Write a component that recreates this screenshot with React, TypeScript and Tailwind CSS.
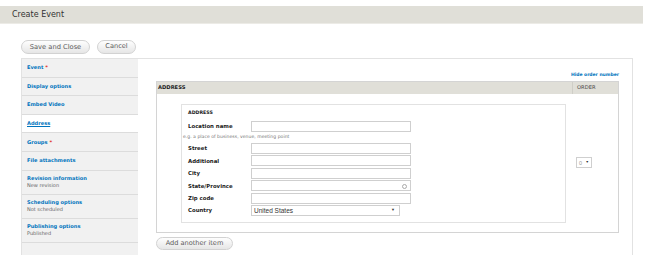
import React from "react";

type Tab = { label: string; sub?: string; required?: boolean; active?: boolean; tall?: boolean };

const tabs: Tab[] = [
  { label: "Event", required: true },
  { label: "Display options" },
  { label: "Embed Video" },
  { label: "Address", active: true },
  { label: "Groups", required: true },
  { label: "File attachments" },
  { label: "Revision information", sub: "New revision", tall: true },
  { label: "Scheduling options", sub: "Not scheduled", tall: true },
  { label: "Publishing options", sub: "Published", tall: true },
];

const fields = ["Street", "Additional", "City", "State/Province", "Zip code"];

function PillButton({ children, className }: { children: React.ReactNode; className?: string }) {
  return (
    <button
      className={
        "flex items-center justify-center rounded-full border border-[#d2d2d2] bg-gradient-to-b from-[#fefefe] to-[#e6e6e6] text-[#5c5c5c] " +
        (className || "")
      }
    >
      {children}
    </button>
  );
}

function TextInput({ throbber }: { throbber?: boolean }) {
  return (
    <div className="relative h-[11px] w-[160px] border border-[#cfcfcf] bg-white">
      {throbber && (
        <span className="absolute right-[3px] top-[2.5px] h-[5px] w-[5px] rounded-full border border-[#aaa]" />
      )}
    </div>
  );
}

export default function App() {
  return (
    <div className="h-[269px] w-[649px] overflow-hidden bg-white font-['DejaVu_Sans',sans-serif] text-[#333]">
      <div className="pt-[6px]">
        <div className="flex h-[18px] w-[643px] items-center border-b border-[#ecebe6] bg-[#e0dfd8] pl-[12px] text-[8px]">
          Create Event
        </div>
      </div>

      <div className="ml-[21px] mt-[16px] flex gap-[7px]">
        <PillButton className="h-[14px] w-[69px] text-[6.7px]">Save and Close</PillButton>
        <PillButton className="h-[14px] w-[39px] text-[6.6px]">Cancel</PillButton>
      </div>

      <div className="ml-[21px] mt-[4px] flex h-[197px] w-[612px] border-r border-t border-[#e2e2e2]">
        {/* vertical tabs */}
        <div className="w-[117px] shrink-0 border-l border-[#e2e2e2] bg-[#f1f1f1]">
          {tabs.map((t) => (
            <div
              key={t.label}
              className={
                "flex flex-col justify-center border-b border-[#dcdcdc] pl-[5px] " +
                (t.tall ? "h-[24px] " : "h-[18.6px] ") +
                (t.active ? "bg-white" : "")
              }
            >
              <div className={"text-[5.1px] font-bold leading-[7px] text-[#0074bd] " + (t.active ? "underline" : "")}>
                {t.label}
                {t.required && <span className="ml-[2px] text-[#e2322e]">*</span>}
              </div>
              {t.sub && <div className="text-[5px] leading-[7px] text-[#666]">{t.sub}</div>}
            </div>
          ))}
        </div>

        {/* content */}
        <div className="flex-1 pl-[18px] pr-[13px] pt-[12px]">
          <div className="mb-[2px] flex h-[8px] items-center justify-end text-[4.5px] font-bold text-[#0074bd]">
            Hide order number
          </div>

          <div className="w-[463px] border border-[#d4d4d4]">
            <div className="flex h-[12px] items-center bg-[#e0dfd8] text-[5.2px]">
              <div className="w-[415px] pl-[1px] font-bold text-[#222]">ADDRESS</div>
              <div className="flex h-full flex-1 items-center border-l border-[#cfcec7] pl-[4px] text-[#444]">
                ORDER
              </div>
            </div>

            <div className="flex">
              <div className="w-[415px] pb-[9px] pl-[24px] pr-[6px] pt-[10px]">
                <div className="border border-[#e2e2e2] pb-[6px] pl-[6px] pt-[4px]">
                  <div className="text-[4.7px] font-bold leading-[7px] text-[#222]">ADDRESS</div>

                  <div className="mt-[5px] flex h-[11px] items-center">
                    <div className="w-[63px] text-[5.4px] font-bold text-[#222]">Location name</div>
                    <TextInput />
                  </div>
                  <div className="-ml-[5px] flex h-[11px] items-center text-[4.6px] text-[#777]">
                    e.g. a place of business, venue, meeting point
                  </div>

                  <div className="flex flex-col gap-[1.4px]">
                    {fields.map((f) => (
                      <div key={f} className="flex h-[11px] items-center">
                        <div className="w-[63px] text-[5.4px] font-bold text-[#222]">{f}</div>
                        <TextInput throbber={f === "State/Province"} />
                      </div>
                    ))}
                    <div className="flex h-[11px] items-center">
                      <div className="w-[63px] text-[5.4px] font-bold text-[#222]">Country</div>
                      <div className="flex h-[11px] w-[149px] items-center justify-between border border-[#cfcfcf] bg-white pl-[2px] pr-[4px] font-['Liberation_Sans',sans-serif] text-[6.5px] text-[#333]">
                        <span>United States</span>
                        <span className="text-[4px]">▼</span>
                      </div>
                    </div>
                  </div>
                </div>
              </div>

              <div className="flex flex-1 items-center pl-[4px]">
                <div className="flex h-[11px] w-[16px] items-center justify-between border border-[#cfcfcf] px-[2px] font-['Liberation_Sans',sans-serif] text-[5.5px] text-[#999]">
                  <span>0</span>
                  <span className="text-[3.5px] text-[#333]">▼</span>
                </div>
              </div>
            </div>
          </div>

          <PillButton className="mt-[4px] h-[13px] w-[77px] text-[6.6px]">Add another item</PillButton>
        </div>
      </div>
    </div>
  );
}
